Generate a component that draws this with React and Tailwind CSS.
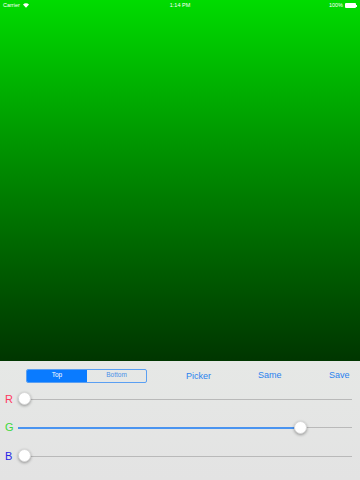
import React from "react";

function Slider({ label, color, value }) {
  return (
    <div className="flex items-center h-[28.5px]">
      <div className={`w-[18px] pl-[5px] text-[11px] leading-none ${color}`}>{label}</div>
      <div className="relative flex-1 mr-[8px] h-[14px]">
        <div className="absolute left-0 right-0 top-[6.5px] h-px bg-[#b9b9b9]" />
        <div className="absolute left-0 top-[6px] h-[2px] bg-[#4a94f0]" style={{ width: `${value}%` }} />
        <div
          className="absolute top-0 w-[13px] h-[13px] rounded-full bg-white shadow-[0_1px_3px_rgba(0,0,0,0.35)] border border-[#dadada]"
          style={{ left: `calc(${value}% - 6.5px)` }}
        />
      </div>
    </div>
  );
}

export default function App() {
  return (
    <div className="w-[360px] h-[480px] flex flex-col overflow-hidden" style={{ fontFamily: '"Liberation Sans", Arial, sans-serif' }}>
      <div className="h-[361px] bg-gradient-to-b from-[#00dc00] to-[#003600] relative">
        <div className="flex items-center justify-between h-[11px] px-[3px] text-white text-[5.5px] leading-none">
          <div className="flex items-center gap-[3px] w-[60px]">
            <span>Carrier</span>
            <svg width="6" height="5" viewBox="0 0 12 9" fill="white">
              <path d="M6 9 L0 2.5 A8.5 8.5 0 0 1 12 2.5 Z" />
            </svg>
          </div>
          <span>1:14 PM</span>
          <div className="flex items-center justify-end gap-[2px] w-[60px]">
            <span>100%</span>
            <div className="flex items-center">
              <div className="w-[11px] h-[5px] bg-white rounded-[1px]" />
              <div className="w-[1px] h-[2px] bg-white" />
            </div>
          </div>
        </div>
      </div>
      <div className="flex-1 bg-gradient-to-b from-[#e6e8e6] to-[#e3e3e3]">
        <div className="flex items-center h-[28px] pt-[1px]">
          <div className="ml-[26px] flex w-[121px] h-[14px] border border-[#5a9ff2] rounded-[2px] overflow-hidden text-[6.5px] leading-none">
            <div className="w-[60px] bg-[#0a7bff] text-white flex items-center justify-center">Top</div>
            <div className="flex-1 text-[#4a90e8] flex items-center justify-center">Bottom</div>
          </div>
          <div className="ml-[39px] w-[26px] text-[#2a82ee] text-[9px] leading-none mt-[1px] whitespace-nowrap">Picker</div>
          <div className="ml-[46px] w-[25px] text-[#2a82ee] text-[9px] leading-none -mt-[1px] whitespace-nowrap">Same</div>
          <div className="ml-[46px] text-[#2a82ee] text-[9px] leading-none -mt-[1px] whitespace-nowrap">Save</div>
        </div>
        <div className="flex flex-col mt-[-4px]">
          <Slider label="R" color="text-[#ff3860]" value={1.8} />
          <Slider label="G" color="text-[#3cd93c]" value={84.7} />
          <Slider label="B" color="text-[#2525e8]" value={1.8} />
        </div>
      </div>
    </div>
  );
}
